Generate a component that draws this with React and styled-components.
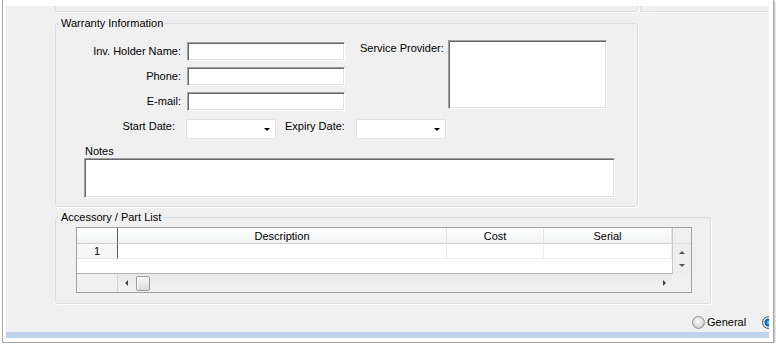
import React from "react";
import styled, { createGlobalStyle, css } from "styled-components";

const GlobalStyle = createGlobalStyle`
  html, body {
    margin: 0;
    padding: 0;
    background: #fff;
  }
  body {
    font-family: "Liberation Sans", Arial, sans-serif;
    font-size: 11px;
    color: #000;
  }
`;

const Window = styled.div`
  margin-left: 2px;
  width: 763px;
  padding: 6px 4px 4px 3px;
  background: #fff;
  border: 1px solid #a8a8a8;
  border-top: none;
  box-shadow: 1px 1px 2px rgba(0, 0, 0, 0.3);
`;

const Content = styled.div`
  height: 332px;
  background: #f0f0f0;
  overflow: hidden;
  display: flex;
  flex-direction: column;
  align-items: flex-start;
`;

const StubRow = styled.div`
  display: flex;
  gap: 2px;
  width: 100%;
  height: 6px;
  padding-left: 49px;
  box-sizing: border-box;
  flex-shrink: 0;
`;

const Stub = styled.div`
  height: 6px;
  box-sizing: border-box;
  border: 1px solid #d5dfe5;
  border-top: none;
  border-radius: 0 0 3px 3px;
  box-shadow: 1px 1px 0 #fff;
  ${(p) => (p.$w ? css`width: ${p.$w}px;` : css`flex: 1;`)}
  ${(p) =>
    p.$open &&
    css`
      border-right: none;
      border-radius: 0 0 0 3px;
    `}
`;

const Group = styled.fieldset`
  margin: ${(p) => p.$top}px 0 0 49px;
  padding: 0 0 ${(p) => p.$pb}px 0;
  width: ${(p) => p.$w}px;
  min-width: 0;
  box-sizing: border-box;
  border: 1px solid #d5dfe5;
  border-radius: 3px;
  box-shadow: 1px 1px 0 #fff;
  flex-shrink: 0;
`;

const Legend = styled.legend`
  margin-left: 3px;
  padding: 0 2px;
  font-size: 11px;
  line-height: 13px;
`;

const TopRow = styled.div`
  display: flex;
  align-items: flex-start;
  margin-top: 10px;
`;

const FieldGrid = styled.div`
  display: grid;
  grid-template-columns: 125px 158px;
  grid-auto-rows: 19px;
  column-gap: 6px;
  row-gap: 6px;
  align-items: center;
  margin-top: 2px;
`;

const Label = styled.span`
  text-align: right;
  white-space: nowrap;
  line-height: 13px;
`;

const sunken = css`
  box-sizing: border-box;
  background: #fff;
  border: 1px solid;
  border-color: #a0a0a0 #ffffff #ffffff #a0a0a0;
  box-shadow: inset 1px 1px 0 #696969, inset -1px -1px 0 #e3e3e3;
`;

const TextBox = styled.div`
  ${sunken}
  height: 19px;
  width: ${(p) => p.$w || 158}px;
`;

const Provider = styled.div`
  display: flex;
  align-items: flex-start;
  margin-left: 15px;
  gap: 4px;
`;

const ProviderLabel = styled(Label)`
  margin-top: 2px;
`;

const MultiBox = styled.div`
  ${sunken}
  width: ${(p) => p.$w}px;
  height: ${(p) => p.$h}px;
  margin-left: ${(p) => p.$ml || 0}px;
`;

const DateRow = styled.div`
  display: flex;
  align-items: flex-start;
  margin-top: 8px;
`;

const DateLabel = styled(Label)`
  line-height: 15px;
  ${(p) => p.$w && css`width: ${p.$w}px;`}
  margin-left: ${(p) => p.$ml || 0}px;
`;

const Combo = styled.div`
  width: 90px;
  height: 20px;
  margin-left: 11px;
  box-sizing: border-box;
  background: #fff;
  border: 1px solid #e2e3e4;
  display: flex;
  align-items: center;
  justify-content: flex-end;
  padding-right: 5px;
`;

const Arrow = styled.span`
  width: 0;
  height: 0;
  border-style: solid;
  flex-shrink: 0;
  ${(p) =>
    ({
      down: css`
        border-width: ${p.$s || 4}px ${p.$s || 4}px 0 ${p.$s || 4}px;
        border-color: ${p.$c || "#000"} transparent transparent transparent;
      `,
      up: css`
        border-width: 0 ${p.$s || 4}px ${p.$s || 4}px ${p.$s || 4}px;
        border-color: transparent transparent ${p.$c || "#000"} transparent;
      `,
      left: css`
        border-width: ${p.$s || 4}px ${p.$s || 4}px ${p.$s || 4}px 0;
        border-color: transparent ${p.$c || "#000"} transparent transparent;
      `,
      right: css`
        border-width: ${p.$s || 4}px 0 ${p.$s || 4}px ${p.$s || 4}px;
        border-color: transparent transparent transparent ${p.$c || "#000"};
      `,
    })[p.$dir]}
`;

const NotesLabel = styled.div`
  margin: 6px 0 0 29px;
  line-height: 13px;
`;

const Table = styled.div`
  margin: 3px 0 0 20px;
  width: 616px;
  box-sizing: border-box;
  border: 1px solid #a0a0a0;
  background: #fff;
  display: grid;
  grid-template-columns: 41px 329px 97px 128px 19px;
  grid-template-rows: 16px 15px 15px 18px;
`;

const HeadCell = styled.div`
  background: linear-gradient(#ffffff, #f1f2f4);
  border-right: 1px solid ${(p) => (p.$rowHead ? "#5a5a5a" : "#e3e4e6")};
  border-bottom: 1px solid #d0d0d0;
  text-align: center;
  line-height: 16px;
  white-space: nowrap;
`;

const Corner = styled.div`
  background: #f0f0f0;
  border-left: 1px solid #c9c9c9;
  border-bottom: 1px solid #dadada;
`;

const RowHead = styled.div`
  background: #f7f7f7;
  border-right: 1px solid #5a5a5a;
  border-bottom: 1px solid #e6e6e6;
  text-align: center;
  line-height: 14px;
`;

const Cell = styled.div`
  border-right: 1px solid #ececec;
  border-bottom: 1px solid #ececec;
`;

const Blank = styled.div`
  grid-column: 1 / 5;
  border-bottom: 1px solid #b5b5b5;
`;

const VScroll = styled.div`
  grid-column: 5;
  grid-row: 2 / 4;
  background: #eeeeee;
  border-left: 1px solid #c9c9c9;
  display: flex;
  flex-direction: column;
  align-items: center;
  justify-content: space-around;
  padding: 2px 0;
`;

const Gutter = styled.div`
  background: #f0f0f0;
  border-right: 1px solid #d2d2d2;
`;

const HScroll = styled.div`
  grid-column: 2 / 5;
  background: linear-gradient(#e9e9e9, #f2f2f2);
  display: flex;
  align-items: center;
  padding: 0 6px 0 7px;
`;

const Thumb = styled.div`
  width: 14px;
  height: 15px;
  margin-left: 8px;
  box-sizing: border-box;
  border: 1px solid #9a9a9a;
  border-radius: 2px;
  background: linear-gradient(#f6f6f6, #dcdcdc);
  box-shadow: inset 1px 1px 0 #fff;
`;

const Spacer = styled.div`
  flex: 1;
`;

const EndCorner = styled.div`
  background: #f0f0f0;
`;

const RadioRow = styled.div`
  display: flex;
  align-items: center;
  margin-top: 12px;
  padding-left: 686px;
  white-space: nowrap;
  flex-shrink: 0;
`;

const Radio = styled.label`
  display: flex;
  align-items: center;
  gap: 2px;
  margin-right: 16px;
  flex-shrink: 0;
  line-height: 13px;
`;

const Dot = styled.span`
  width: 13px;
  height: 13px;
  border-radius: 50%;
  box-sizing: border-box;
  border: 1px solid #8e8f8f;
  flex-shrink: 0;
  background: radial-gradient(circle at 45% 40%, #fdfdfd 0, #e8e8e8 3px, #cfcfcf 6px);
  ${(p) =>
    p.$on &&
    css`
      border-color: #2c628b;
      background: radial-gradient(
        circle,
        #7cd0ff 0,
        #2487d6 2px,
        #0d4f8c 3.5px,
        #e6edf3 4.5px,
        #c9d5df 6px
      );
    `}
`;

const StatusBar = styled.div`
  margin-top: auto;
  width: 100%;
  height: 6px;
  background: #bcd4ec;
  flex-shrink: 0;
`;

const App = () => {
  return (
    <>
      <GlobalStyle />
      <Window>
        <Content>
          <StubRow>
            <Stub $w={583} />
            <Stub $open />
          </StubRow>

          <Group $top={5} $w={583} $pb={8}>
            <Legend>Warranty Information</Legend>
            <TopRow>
              <FieldGrid>
                <Label>Inv. Holder Name:</Label>
                <TextBox />
                <Label>Phone:</Label>
                <TextBox />
                <Label>E-mail:</Label>
                <TextBox />
              </FieldGrid>
              <Provider>
                <ProviderLabel>Service Provider:</ProviderLabel>
                <MultiBox $w={159} $h={69} />
              </Provider>
            </TopRow>
            <DateRow>
              <DateLabel $w={119}>Start Date:</DateLabel>
              <Combo>
                <Arrow $dir="down" $s={3.5} />
              </Combo>
              <DateLabel $ml={9}>Expiry Date:</DateLabel>
              <Combo>
                <Arrow $dir="down" $s={3.5} />
              </Combo>
            </DateRow>
            <NotesLabel>Notes</NotesLabel>
            <MultiBox $w={531} $h={40} $ml={28} />
          </Group>

          <Group $top={4} $w={656} $pb={10}>
            <Legend>Accessory / Part List</Legend>
            <Table>
              <HeadCell $rowHead />
              <HeadCell>Description</HeadCell>
              <HeadCell>Cost</HeadCell>
              <HeadCell>Serial</HeadCell>
              <Corner />

              <RowHead>1</RowHead>
              <Cell />
              <Cell />
              <Cell />
              <VScroll>
                <Arrow $dir="up" $s={3} $c="#555" />
                <Arrow $dir="down" $s={3} $c="#555" />
              </VScroll>

              <Blank />

              <Gutter />
              <HScroll>
                <Arrow $dir="left" $s={3} $c="#444" />
                <Thumb />
                <Spacer />
                <Arrow $dir="right" $s={3} $c="#444" />
              </HScroll>
              <EndCorner />
            </Table>
          </Group>

          <RadioRow>
            <Radio>
              <Dot />
              General
            </Radio>
            <Radio>
              <Dot $on />
            </Radio>
          </RadioRow>

          <StatusBar />
        </Content>
      </Window>
    </>
  );
};

export default App;
